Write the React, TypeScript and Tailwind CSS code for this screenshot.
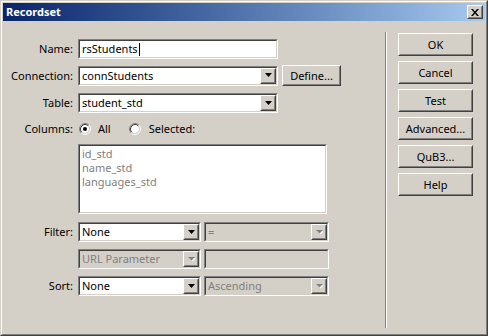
import React from "react";

const FONT = { fontFamily: '"Noto Sans", "DejaVu Sans", sans-serif' };

function Sunken({ className, inner, children }: { className: string; inner: string; children?: React.ReactNode }) {
  return (
    <div className={`flex border border-t-[#808080] border-l-[#808080] border-b-white border-r-white ${className}`}>
      <div className={`flex flex-1 min-w-0 border border-t-[#404040] border-l-[#404040] border-b-[#d4d0c8] border-r-[#d4d0c8] ${inner}`}>
        {children}
      </div>
    </div>
  );
}

function Raised({ className, inner, children }: { className: string; inner?: string; children?: React.ReactNode }) {
  return (
    <div className={`flex border border-t-white border-l-white border-b-[#404040] border-r-[#404040] bg-[#d4d0c8] ${className}`}>
      <div className={`flex flex-1 items-center justify-center border border-t-[#d4d0c8] border-l-[#d4d0c8] border-b-[#808080] border-r-[#808080] ${inner ?? ""}`}>
        {children}
      </div>
    </div>
  );
}

function Arrow({ disabled }: { disabled?: boolean }) {
  return (
    <Raised className="w-[16px] h-[16px] shrink-0">
      <svg width="7" height="5" viewBox="0 0 7 5" className="block">
        {disabled ? (
          <>
            <path d="M1 1h7L4.5 4.5z" fill="#ffffff" />
            <path d="M0 0h7L3.5 3.5z" fill="#808080" />
          </>
        ) : (
          <path d="M0 0h7L3.5 4z" fill="#000000" />
        )}
      </svg>
    </Raised>
  );
}

function Select({ width, value, disabled }: { width: string; value: string; disabled?: boolean }) {
  return (
    <Sunken className={`h-[20px] ${width}`} inner={disabled ? "bg-[#d4d0c8]" : "bg-white"}>
      <div className={`flex-1 pl-[2px] text-[11px] leading-[16px] whitespace-nowrap overflow-hidden ${disabled ? "text-[#808080]" : "text-black"}`}>
        {value}
      </div>
      <Arrow disabled={disabled} />
    </Sunken>
  );
}

function Radio({ checked }: { checked?: boolean }) {
  return (
    <svg width="12" height="12" viewBox="0 0 12 12" className="block shrink-0">
      <circle cx="6" cy="6" r="4" fill="#ffffff" />
      <path d="M2.11 9.89A5.5 5.5 0 0 1 9.89 2.11" stroke="#808080" fill="none" />
      <path d="M9.89 2.11A5.5 5.5 0 0 1 2.11 9.89" stroke="#ffffff" fill="none" />
      <path d="M2.82 9.18A4.5 4.5 0 0 1 9.18 2.82" stroke="#404040" fill="none" />
      <path d="M9.18 2.82A4.5 4.5 0 0 1 2.82 9.18" stroke="#d4d0c8" fill="none" />
      {checked && <circle cx="6" cy="6" r="2" fill="#000000" />}
    </svg>
  );
}

function Label({ children }: { children: React.ReactNode }) {
  return <div className="w-[70px] shrink-0 text-right text-[11px] leading-[14px] text-black">{children}</div>;
}

function Button({ children }: { children: React.ReactNode }) {
  return (
    <Raised className="w-[75px] h-[23px]" inner="text-[11px] leading-[14px] text-black">
      {children}
    </Raised>
  );
}

export default function App() {
  return (
    <div style={FONT} className="w-[488px] h-[336px] overflow-hidden bg-[#d4d0c8]">
      <div className="w-full h-full border border-t-[#d4d0c8] border-l-[#d4d0c8] border-b-[#404040] border-r-[#404040]">
        <div className="w-full h-full flex flex-col border border-t-white border-l-white border-b-[#808080] border-r-[#808080] p-[1px]">
          {/* title bar */}
          <div className="h-[18px] shrink-0 flex items-center justify-between bg-gradient-to-r from-[#0a246a] to-[#a6caf0] pl-[3px] pr-[2px]">
            <span className="text-white font-bold text-[11px] leading-[14px]">Recordset</span>
            <Raised className="w-[16px] h-[14px]">
              <svg width="8" height="7" viewBox="0 0 8 7" className="block">
                <path d="M0 0h2l2 2.5L6 0h2L5 3.5 8 7H6L4 4.5 2 7H0l3-3.5z" fill="#000000" />
              </svg>
            </Raised>
          </div>
          {/* body */}
          <div className="flex flex-1">
            {/* form */}
            <div className="w-[382px] shrink-0 flex flex-col pt-[18px]">
              <div className="flex items-center gap-[5px] h-[20px]">
                <Label>Name:</Label>
                <Sunken className="h-[20px] w-[200px]" inner="bg-white">
                  <div className="flex items-center pl-[2px] text-[11px] leading-[16px] text-black">
                    rsStudents
                    <span className="inline-block w-px h-[13px] bg-black ml-[1px]" />
                  </div>
                </Sunken>
              </div>
              <div className="flex items-center gap-[5px] h-[21px] mt-[6px]">
                <Label>Connection:</Label>
                <Select width="w-[200px]" value="connStudents" />
                <Raised className="w-[59px] h-[21px] ml-[-1px]" inner="text-[11px] leading-[14px] text-black">
                  Define...
                </Raised>
              </div>
              <div className="flex items-center gap-[5px] h-[20px] mt-[7px]">
                <Label>Table:</Label>
                <Select width="w-[200px]" value="student_std" />
              </div>
              <div className="flex items-center h-[14px] mt-[9px]">
                <Label>Columns:</Label>
                <div className="ml-[6px]">
                  <Radio checked />
                </div>
                <span className="ml-[7px] text-[11px] leading-[14px] text-black">All</span>
                <div className="ml-[18px]">
                  <Radio />
                </div>
                <span className="ml-[8px] text-[11px] leading-[14px] text-black">Selected:</span>
              </div>
              <div className="flex mt-[8px] pl-[75px]">
                <Sunken className="w-[249px] h-[70px]" inner="bg-white flex-col pl-[2px] pt-[1px]">
                  <div className="text-[11px] leading-[14px] text-[#808080]">id_std</div>
                  <div className="text-[11px] leading-[14px] text-[#808080]">name_std</div>
                  <div className="text-[11px] leading-[14px] text-[#808080]">languages_std</div>
                </Sunken>
              </div>
              <div className="flex items-center gap-[5px] h-[20px] mt-[8px]">
                <Label>Filter:</Label>
                <Select width="w-[123px]" value="None" />
                <div className="ml-[-2px]">
                  <Select width="w-[125px]" value="=" disabled />
                </div>
              </div>
              <div className="flex items-center gap-[5px] h-[20px] mt-[7px]">
                <div className="w-[70px] shrink-0" />
                <Select width="w-[123px]" value="URL Parameter" disabled />
                <div className="ml-[-2px]">
                  <Sunken className="h-[20px] w-[125px]" inner="bg-[#d4d0c8]" />
                </div>
              </div>
              <div className="flex items-center gap-[5px] h-[20px] mt-[7px]">
                <Label>Sort:</Label>
                <Select width="w-[123px]" value="None" />
                <div className="ml-[-2px]">
                  <Select width="w-[125px]" value="Ascending" disabled />
                </div>
              </div>
            </div>
            {/* separator */}
            <div className="w-[2px] shrink-0 mt-[11px] mb-[5px] border-l border-l-[#808080] border-r border-r-white" />
            {/* buttons */}
            <div className="flex flex-col gap-[5px] pt-[12px] ml-[11px]">
              <Button>OK</Button>
              <Button>Cancel</Button>
              <Button>Test</Button>
              <Button>Advanced...</Button>
              <Button>QuB3...</Button>
              <Button>Help</Button>
            </div>
          </div>
        </div>
      </div>
    </div>
  );
}
